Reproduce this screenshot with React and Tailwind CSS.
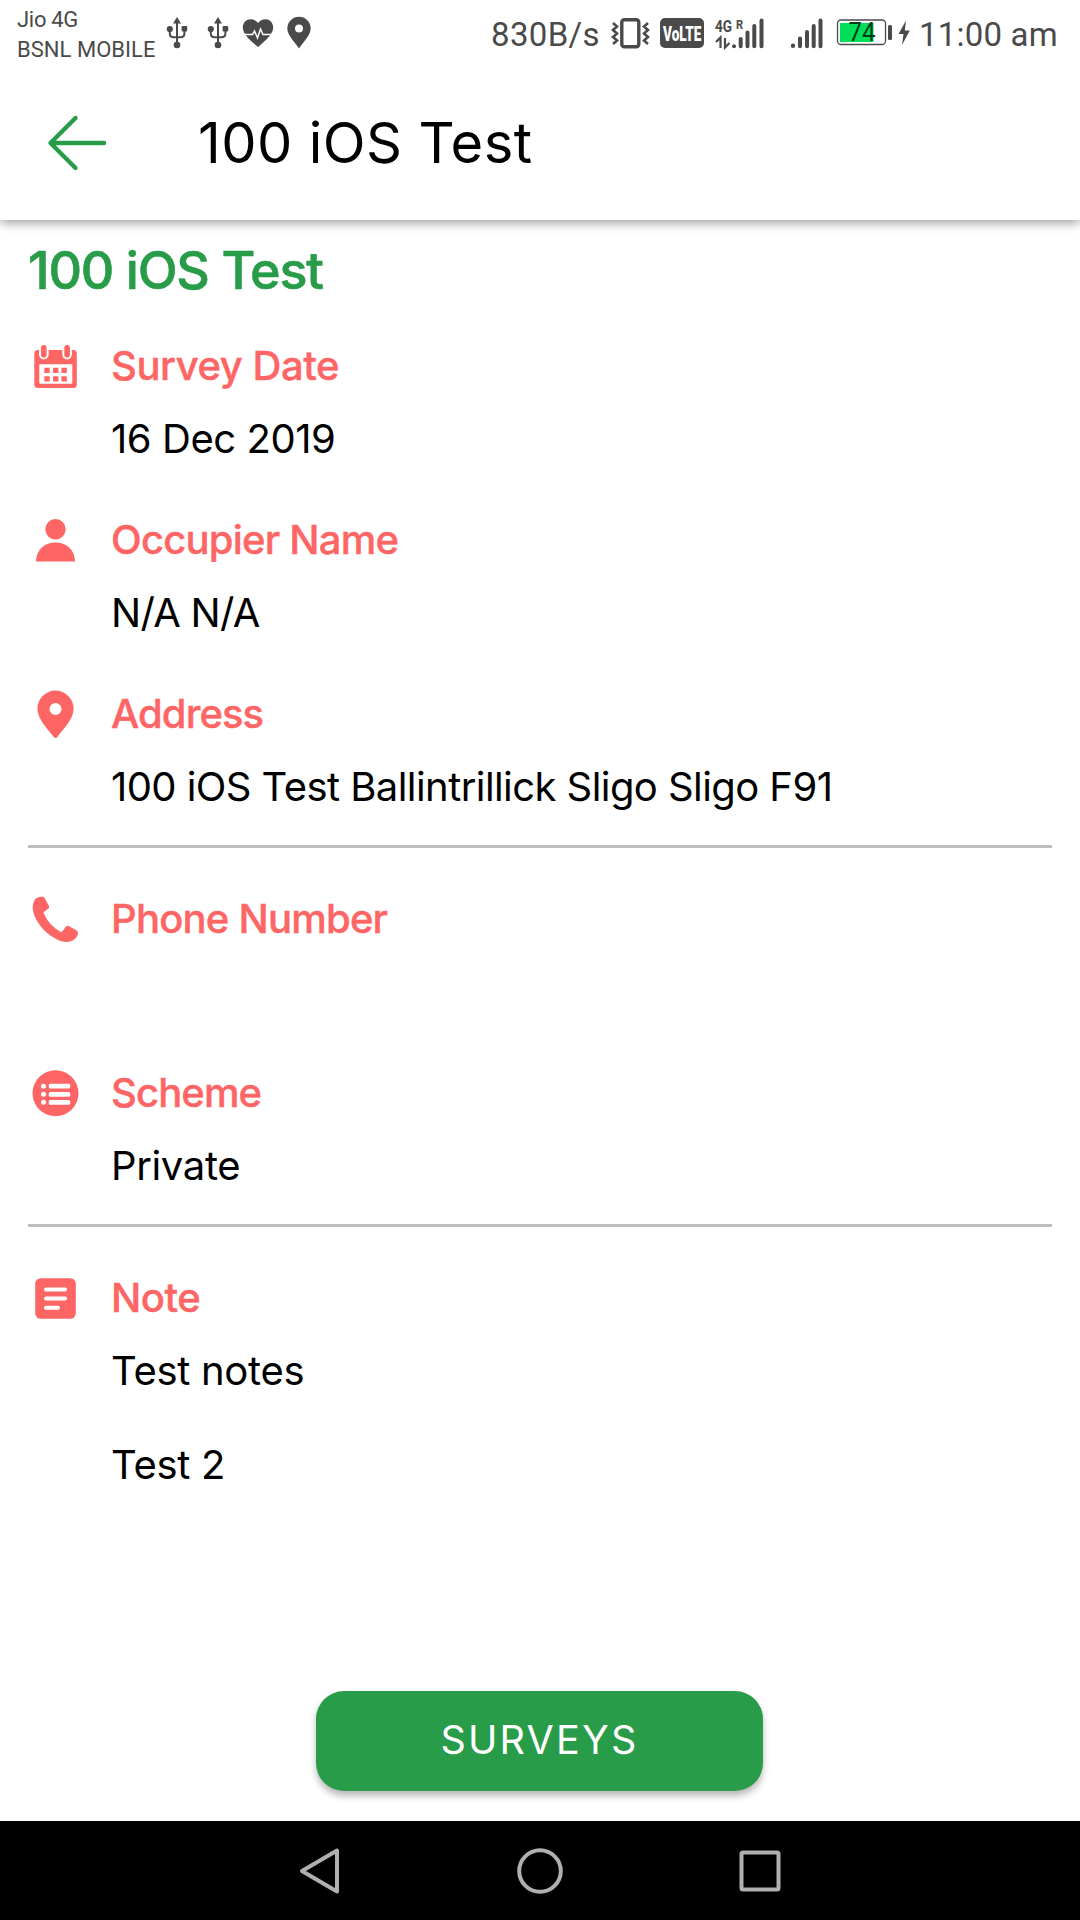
const CORAL = "#fe6565";
const GREY = "#4a4a4a";

function UsbIcon() {
  return (
    <svg className="h-[34px] w-[22px]" viewBox="0 0 22 34" fill={GREY} stroke="none">
      <path d="M11 1l4 6.5H7z" />
      <circle cx="11" cy="29" r="3.3" />
      <circle cx="3.8" cy="13" r="3.1" />
      <rect x="15.6" y="10" width="5.6" height="5.6" rx="1" />
      <path
        d="M11 6v24M3.8 13v4.5q0 3.7 3.7 3.7h7q3.9 0 3.9-3.7V13"
        fill="none"
        stroke={GREY}
        strokeWidth="2"
      />
    </svg>
  );
}

function HeartIcon() {
  return (
    <svg className="h-[30px] w-[32px]" viewBox="0 0 32 30">
      <path
        d="M16 29C12 25.500 0.800 17.500 0.800 9.600C0.800 4.800 4.400 1.300 8.700 1.300C11.600 1.300 14.400 2.700 16 5C17.600 2.700 20.400 1.300 23.300 1.300C27.600 1.300 31.200 4.800 31.200 9.600C31.200 17.500 20 25.500 16 29Z"
        fill={GREY}
      />
      <path d="M0 16.500H10.500L12.500 13L15.500 20L18.500 11L21 16.500H32" fill="none" stroke="#fff" strokeWidth="1.500" />
    </svg>
  );
}

function StatusPin() {
  return (
    <svg className="h-[34px] w-[24px]" viewBox="0 0 24 34">
      <path
        fillRule="evenodd"
        fill={GREY}
        d="M12 32.500C9 27.500 .3 19.500 .3 12.500a11.700 11.700 0 0 1 23.400 0C23.700 19.500 15 27.500 12 32.500ZM12 8.500a4 4 0 1 0 0 8a4 4 0 1 0 0-8Z"
      />
    </svg>
  );
}

function VibrateIcon() {
  return (
    <svg className="h-[32px] w-[40px] shrink-0" viewBox="611 17 40 32" fill="none" stroke={GREY}>
      <rect x="621.800" y="19.700" width="17" height="27" rx="2.500" strokeWidth="3.400" />
      <path d="M613 23l4 3.500-4 3.500 4 3.500-4 3.500 4 3.500-4 3.500M648 23l-4 3.500 4 3.500-4 3.500 4 3.500-4 3.500 4 3.500" strokeWidth="2.600" />
    </svg>
  );
}

function MobileDataIcon() {
  return (
    <svg className="h-[34px] w-[52px]" viewBox="714 15 52 34" fill={GREY}>
      <text transform="translate(715 31) scale(0.8 1)" fontSize="17" fontWeight="700" fontFamily="Roboto, sans-serif">4G</text>
      <text transform="translate(736 28) scale(0.85 1)" fontSize="13" fontWeight="700" fontFamily="Roboto, sans-serif">R</text>
      <path d="M716 41l4.500-4.500V47M729.500 42l-4.500 4.500V37" fill="none" stroke={GREY} strokeWidth="2.200" />
      <circle cx="734" cy="45.200" r="2" />
      <path d="M740.700 38v7.300M747.500 31.500v13.800M754.300 25v20.300M761.500 19.500v25.800" stroke={GREY} strokeWidth="4" strokeLinecap="round" />
    </svg>
  );
}

function SignalIcon() {
  return (
    <svg className="h-[34px] w-[34px]" viewBox="790 15 34 34" fill={GREY}>
      <circle cx="793" cy="44.700" r="2.200" />
      <path d="M800 37.500v7.800M807 31v14.300M813.700 25v20.300M820.500 19.500v25.800" stroke={GREY} strokeWidth="4" strokeLinecap="round" />
    </svg>
  );
}

function BatteryIcon() {
  return (
    <svg className="h-[30px] w-[75px]" viewBox="836 18 75 30">
      <rect x="837.500" y="20" width="48" height="24.500" rx="3.500" fill="#fff" stroke={GREY} strokeWidth="1.300" />
      <rect x="840" y="23" width="33.500" height="19" fill="#00df59" />
      <text x="848.500" y="41" fontSize="25" fontFamily="Roboto, sans-serif" fill="#063d18" textLength="27" lengthAdjust="spacingAndGlyphs">74</text>
      <rect x="888" y="25" width="4" height="15" rx="1.500" fill={GREY} />
      <path d="M906 20.500L898.500 34H903.500L902 45L909.800 30.500H904.800Z" fill={GREY} />
    </svg>
  );
}

function StatusBar() {
  return (
    <div className="flex h-[66px] shrink-0 items-center pl-[18px] font-[Roboto,sans-serif] text-[#4a4a4a]">
      <div className="mt-[3px] flex w-[148px] flex-col whitespace-nowrap text-[22px] leading-[30px]">
        <span className="-ml-[1px] tracking-[-0.3px]">Jio 4G</span>
        <span className="-ml-[1px] tracking-[0.03px]">BSNL MOBILE</span>
      </div>
      <UsbIcon />
      <div className="ml-[19px]"><UsbIcon /></div>
      <div className="ml-[13px]"><HeartIcon /></div>
      <div className="ml-[13px]"><StatusPin /></div>
      <span className="ml-[180px] mt-[3px] w-[120px] shrink-0 whitespace-nowrap text-[33px] leading-[40px] tracking-[0.35px]">830B/s</span>
      <VibrateIcon />
      <div className="ml-[9px] flex h-[30px] w-[44px] shrink-0 items-center justify-center rounded-[5px] bg-[#4a4a4a]">
        <svg className="h-[30px] w-[44px]" viewBox="0 0 44 30">
          <text transform="translate(3 22.5) scale(0.66 1)" fontSize="20.500" fontWeight="900" fill="#fff" fontFamily="Roboto, sans-serif">VoLTE</text>
        </svg>
      </div>
      <div className="ml-[10px]"><MobileDataIcon /></div>
      <div className="ml-[24px]"><SignalIcon /></div>
      <div className="ml-[12px]"><BatteryIcon /></div>
      <span className="ml-[8px] mt-[3px] whitespace-nowrap text-[33px] leading-[40px] tracking-[0.2px]">11:00 am</span>
    </div>
  );
}

const icons = {
  calendar: (
    <svg className="h-[73px] w-[56px]" viewBox="28 329 56 73" fill={CORAL}>
      <rect x="34.300" y="350" width="42.500" height="38" rx="3.500" />
      <rect x="39.300" y="364.300" width="33" height="19.500" rx="1" fill="#fff" />
      <rect x="41" y="345" width="5.600" height="12.500" rx="2.800" stroke="#fff" strokeWidth="4" paintOrder="stroke" />
      <rect x="64.300" y="345" width="5.600" height="12.500" rx="2.800" stroke="#fff" strokeWidth="4" paintOrder="stroke" />
      <path d="M44.300 367.700h5.400v5.400h-5.400zM53 367.700h5.400v5.400H53zM61.400 367.700h5.400v5.400h-5.400zM44.300 376.200h5.400v5.200h-5.400zM53 376.200h5.400v5.200H53zM61.400 376.200h5.400v5.200h-5.400z" />
    </svg>
  ),
  person: (
    <svg className="h-[73px] w-[56px]" viewBox="28 503 56 73" fill={CORAL}>
      <circle cx="55.500" cy="529.300" r="10.200" />
      <path d="M36 561.500C36 549.500 45 542.500 55.500 542.500S75 549.500 75 561.500Z" />
    </svg>
  ),
  pin: (
    <svg className="h-[73px] w-[56px]" viewBox="28 677 56 73" fill={CORAL}>
      <path
        fillRule="evenodd"
        d="M57 737.200Q55.500 739 54 737.200C48 729.500 37.400 719 37.400 708.700a18.100 18.100 0 0 1 36.200 0C73.600 719 63 729.500 57 737.200ZM55.500 703a6 6 0 1 0 0 12a6 6 0 1 0 0-12Z"
      />
    </svg>
  ),
  phone: (
    <svg className="h-[73px] w-[56px]" viewBox="28 882 56 73" fill={CORAL}>
      <path d="M35 899.500C36.500 897.500 40 896.500 42.500 896.800Q44 897 44.800 898.500L49 906Q49.600 907.300 48.600 908.400L43.500 912.300C45.500 919.500 54.500 929.500 61.600 932.200L66 926.500Q67 925.300 68.500 926L76.700 930.600Q78.200 931.600 78 933.300C77.500 937.500 74 940.500 70 941.600C62 943.500 50 937 42.500 928.500C36 921 31.500 911.500 33 904.500Q33.500 901.500 35 899.500Z" />
    </svg>
  ),
  list: (
    <svg className="h-[73px] w-[56px]" viewBox="28 1056 56 73" fill={CORAL}>
      <circle cx="55.500" cy="1093.300" r="23" />
      <g fill="#fff">
        <circle cx="43.500" cy="1086.200" r="2.500" />
        <circle cx="43.500" cy="1094.300" r="2.500" />
        <circle cx="43.500" cy="1102.300" r="2.500" />
        <rect x="48.800" y="1083.800" width="21.400" height="4.700" rx="1.500" />
        <rect x="48.800" y="1092" width="21.400" height="4.700" rx="1.500" />
        <rect x="48.800" y="1100" width="21.400" height="4.700" rx="1.500" />
      </g>
    </svg>
  ),
  note: (
    <svg className="h-[73px] w-[56px]" viewBox="28 1261 56 73" fill={CORAL}>
      <rect x="35.200" y="1278.200" width="40.600" height="40.600" rx="5.500" />
      <path d="M46 1289.500H65M46 1298.500H65M46 1307.700H58" stroke="#fff" strokeWidth="4" strokeLinecap="round" />
    </svg>
  ),
};

function Field({ icon, label, values, labelClass, valueClass }) {
  return (
    <div className="whitespace-nowrap text-[40px] leading-[73px]">
      <div className="flex h-[73px]">
        {icons[icon]}
        <span className={`ml-[27px] font-medium text-[#fe6565] [-webkit-text-stroke:0.4px_#fe6565] ${labelClass}`}>{label}</span>
      </div>
      <div className={`ml-[83px] flex min-h-[73px] flex-col gap-[21px] text-black ${valueClass}`}>
        {values.map((v) => (
          <div key={v} className="h-[73px]">{v}</div>
        ))}
      </div>
    </div>
  );
}

export default function App() {
  return (
    <div className="flex h-[1920px] w-[1080px] flex-col overflow-hidden bg-white font-[Inter,sans-serif]">
      <div className="z-10 flex h-[220px] shrink-0 flex-col bg-white shadow-[0_3px_10px_rgba(0,0,0,0.38)]">
        <StatusBar />
        <header className="flex h-[154px] items-center pl-[46px]">
          <svg className="h-[60px] w-[62px]" viewBox="46 113 62 60" fill="none" stroke="#289c48" strokeWidth="4.400" strokeLinecap="round" strokeLinejoin="round">
            <path d="M104 143H50.500M75.500 118L50.500 143L75.500 168" />
          </svg>
          <h1 className="ml-[90px] whitespace-nowrap text-[56px] leading-[70px] tracking-[0.4px] text-black">100 iOS Test</h1>
        </header>
      </div>

      <main className="flex h-[1601px] shrink-0 flex-col px-7">
        <h2 className="mt-[16px] h-[70px] whitespace-nowrap text-[52px] font-medium leading-[70px] tracking-[-1.2px] text-[#289c48] [-webkit-text-stroke:0.6px_#289c48]">100 iOS Test</h2>
        <section className="mt-[23px] flex h-[516px] flex-col gap-7">
          <Field icon="calendar" label="Survey Date" values={["16 Dec 2019"]} labelClass="tracking-[-0.45px]" valueClass="tracking-[-0.45px]" />
          <Field icon="person" label="Occupier Name" values={["N/A N/A"]} labelClass="tracking-[-0.78px]" valueClass="tracking-[-0.7px]" />
          <Field icon="pin" label="Address" values={["100 iOS Test Ballintrillick Sligo Sligo F91"]} labelClass="tracking-[-0.95px]" valueClass="tracking-[-0.57px]" />
        </section>
        <div className="h-[3px] shrink-0 bg-[#bdbdbd]" />
        <section className="mt-[34px] flex h-[342px] shrink-0 flex-col gap-7">
          <Field icon="phone" label="Phone Number" values={[]} labelClass="tracking-[-0.78px]" valueClass="" />
          <Field icon="list" label="Scheme" values={["Private"]} labelClass="tracking-[-0.88px]" valueClass="tracking-[-0.35px]" />
        </section>
        <div className="h-[3px] shrink-0 bg-[#bdbdbd]" />
        <section className="mt-[34px]">
          <Field icon="note" label="Note" values={["Test notes", "Test 2"]} labelClass="tracking-[-0.5px]" valueClass="tracking-[-0.3px]" />
        </section>
        <button className="mb-[30px] ml-[288px] mt-auto h-[100px] w-[447px] shrink-0 rounded-[28px] bg-[#289c48] text-[39.5px] font-[370] tracking-[2.2px] text-white shadow-[0_5px_7px_rgba(0,0,0,0.28)]">
          SURVEYS
        </button>
      </main>

      <nav className="flex h-[99px] shrink-0 items-center justify-between bg-black pl-[299px] pr-[298px]">
        <svg className="h-[50px] w-[42px]" viewBox="299 1846 42 50" fill="none" stroke="#b0b0b0" strokeWidth="4" strokeLinejoin="round">
          <path d="M337 1850.500V1891.500L302 1871Z" />
        </svg>
        <svg className="h-[50px] w-[50px]" viewBox="515 1846 50 50" fill="none" stroke="#b0b0b0" strokeWidth="4">
          <circle cx="540" cy="1871" r="20.800" />
        </svg>
        <svg className="h-[50px] w-[44px]" viewBox="738 1846 44 50" fill="none" stroke="#b0b0b0" strokeWidth="4">
          <rect x="741.500" y="1852.500" width="37" height="37" rx="1.500" />
        </svg>
      </nav>
    </div>
  );
}
